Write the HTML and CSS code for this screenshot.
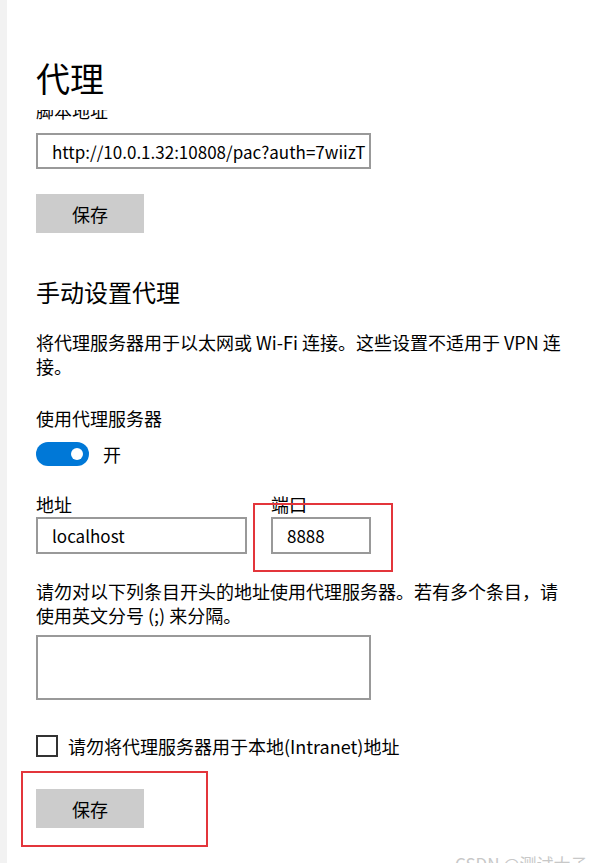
FILE: index.html
```html
<!DOCTYPE html>
<html lang="zh-CN">
<head>
    <meta charset="UTF-8">
    <meta name="viewport" content="width=device-width, initial-scale=1.0">
    <title>代理</title>
    <link rel="stylesheet" href="styles.css">
</head>
<body>
    <div class="sidebar"></div>

    <main class="settings">
        <h1>代理</h1>

        <div class="scroll-clip">
            <label class="field-label" for="scriptUrl">脚本地址</label>
        </div>
        <input type="text" id="scriptUrl" class="text-box url-box" value="http://10.0.1.32:10808/pac?auth=7wiizT">

        <button type="button" class="save-btn save-top">保存</button>

        <h2>手动设置代理</h2>

        <p class="desc">将代理服务器用于以太网或 Wi-Fi 连接。这些设置不适用于 VPN 连接。</p>

        <div class="toggle-label">使用代理服务器</div>
        <div class="toggle-row">
            <span class="toggle on"><span class="knob"></span></span>
            <span class="toggle-state">开</span>
        </div>

        <div class="proxy-fields">
            <div class="field">
                <label class="field-label" for="address">地址</label>
                <input type="text" id="address" class="text-box address-box" value="localhost">
            </div>
            <div class="field port-field">
                <label class="field-label" for="port">端口</label>
                <input type="text" id="port" class="text-box port-box" value="8888">
                <span class="mark mark-port"></span>
            </div>
        </div>

        <p class="desc desc-exceptions">请勿对以下列条目开头的地址使用代理服务器。若有多个条目，请使用英文分号 (;) 来分隔。</p>

        <textarea class="text-box exceptions-box"></textarea>

        <label class="check-row">
            <span class="checkbox"></span>
            <span>请勿将代理服务器用于本地(Intranet)地址</span>
        </label>

        <div class="save-wrap">
            <button type="button" class="save-btn">保存</button>
            <span class="mark mark-save"></span>
        </div>
    </main>

    <div class="watermark">CSDN @测试大子</div>
</body>
</html>
```

FILE: styles.css
```css
* {
    box-sizing: border-box;
    margin: 0;
    padding: 0;
}

html, body {
    height: 863px;
    overflow: hidden;
}

body {
    display: flex;
    font-family: "Noto Sans CJK SC", sans-serif;
    color: #000;
    background: #fff;
    position: relative;
}

.sidebar {
    width: 7px;
    flex-shrink: 0;
    background: #f2f2f2;
}

.settings {
    width: 534px;
    padding-left: 29px;
    padding-top: 57px;
    box-sizing: content-box;
}

h1 {
    font-size: 34px;
    line-height: 42px;
    font-weight: normal;
}

/* the page is scrolled: the header hides the top of this label */
.scroll-clip {
    height: 11px;
    margin-top: 11px;
    overflow: hidden;
}

.scroll-clip .field-label {
    margin-top: -12px;
}

.field-label {
    display: block;
    font-size: 18px;
    line-height: 24px;
}

.text-box {
    display: block;
    border: 2px solid #999;
    background: #fff;
    font-family: "Noto Sans CJK SC", sans-serif;
    font-size: 17px;
    color: #000;
    padding: 0 14px;
    outline: none;
}

.url-box {
    width: 335px;
    height: 36px;
    margin-top: 12px;
    padding-right: 1px;
}

.save-btn {
    display: block;
    width: 108px;
    height: 39px;
    border: none;
    background: #ccc;
    font-family: "Noto Sans CJK SC", sans-serif;
    font-size: 18px;
    color: #000;
    cursor: pointer;
}

.save-top {
    margin-top: 25px;
}

h2 {
    font-size: 24px;
    line-height: 32px;
    font-weight: normal;
    margin-top: 43px;
}

.desc {
    font-size: 18px;
    line-height: 24px;
    margin-top: 22px;
}

.toggle-label {
    font-size: 18px;
    line-height: 24px;
    margin-top: 28px;
}

.toggle-row {
    display: flex;
    align-items: center;
    gap: 14px;
    margin-top: 12px;
}

.toggle {
    width: 53px;
    height: 24px;
    border-radius: 12px;
    background: #0078d7;
    display: flex;
    align-items: center;
    justify-content: flex-end;
    padding-right: 6px;
}

.knob {
    width: 12px;
    height: 12px;
    border-radius: 50%;
    background: #fff;
}

.toggle-state {
    font-size: 18px;
    line-height: 24px;
}

.proxy-fields {
    display: flex;
    gap: 24px;
    margin-top: 26px;
}

.field .text-box {
    height: 37px;
    margin-top: 1px;
}

.address-box {
    width: 211px;
}

.port-box {
    width: 100px;
}

.port-field {
    position: relative;
}

/* red annotation boxes drawn over the screenshot */
.mark {
    position: absolute;
    border: 2px solid #e3353b;
    pointer-events: none;
}

.mark-port {
    left: -18px;
    top: 11px;
    width: 140px;
    height: 69px;
}

.desc-exceptions {
    margin-top: 25px;
}

.exceptions-box {
    width: 335px;
    height: 65px;
    margin-top: 8px;
    resize: none;
}

.check-row {
    display: flex;
    align-items: center;
    gap: 10px;
    margin-top: 34px;
    font-size: 18px;
    line-height: 24px;
}

.checkbox {
    width: 22px;
    height: 22px;
    border: 2px solid #333;
    background: #fff;
}

.save-wrap {
    position: relative;
    margin-top: 31px;
}

.mark-save {
    left: -15px;
    top: -18px;
    width: 187px;
    height: 76px;
}

.watermark {
    position: absolute;
    left: 455px;
    top: 852px;
    font-size: 17px;
    line-height: 24px;
    color: #c8c8c8;
    white-space: nowrap;
}
```
